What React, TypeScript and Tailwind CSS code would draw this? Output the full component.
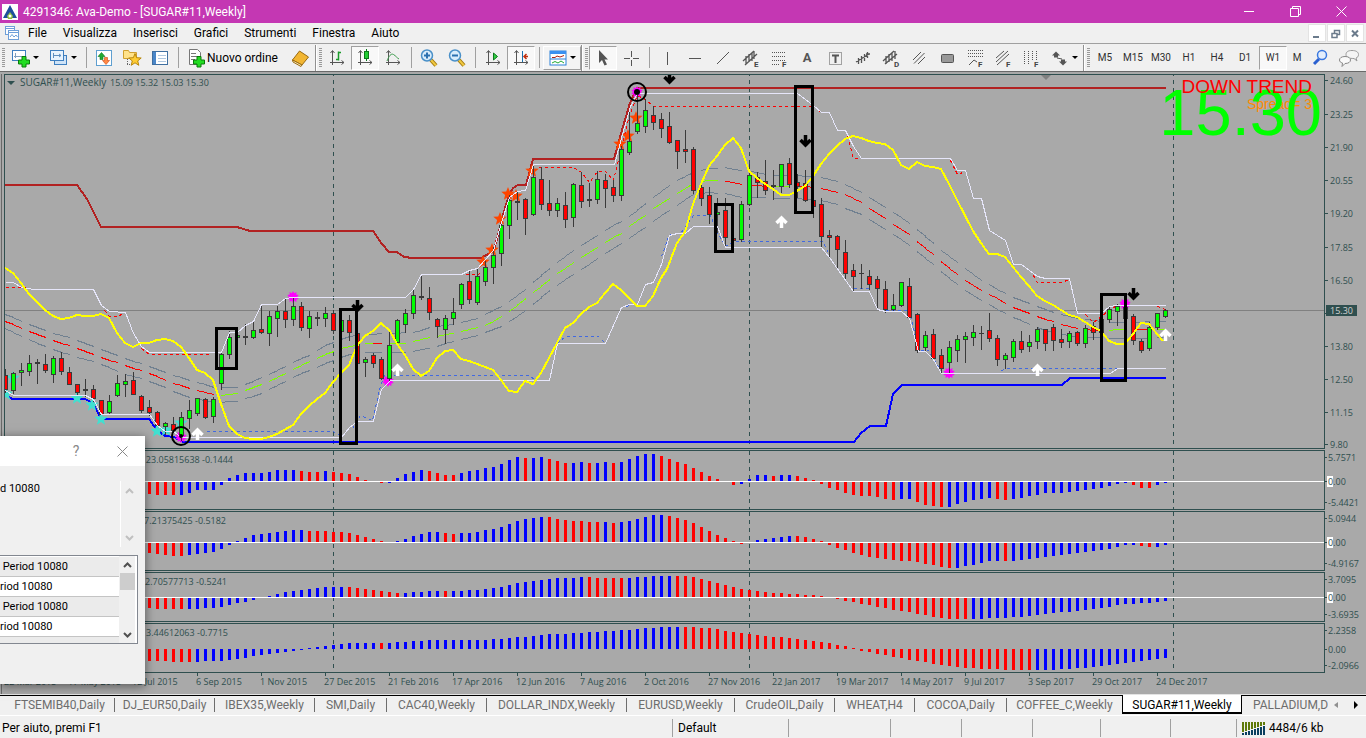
import React from 'react';

type Candle = [high: number, top: number, bottom: number, low: number, dir: 'u' | 'd' | 'n'];
type Point = [number, number];

const STEP = 8;
const FIRST_X = 5;
const barX = (i: number) => FIRST_X + i * STEP;

const TEAL = '#2f4f4f';

const CANDLES: Candle[] = [
  [369, 375, 389, 392, 'd'], [372, 373, 390, 393, 'u'], [363, 370, 372, 385, 'u'], [355, 363, 371, 375, 'u'],
  [359, 362, 363, 383, 'n'], [354, 364, 370, 372, 'd'], [356, 358, 374, 382, 'u'], [352, 358, 371, 374, 'd'],
  [367, 372, 384, 384, 'd'], [384, 384, 392, 395, 'd'], [379, 389, 390, 396, 'n'], [385, 389, 398, 401, 'd'],
  [400, 400, 414, 414, 'd'], [395, 401, 412, 413, 'u'], [375, 383, 395, 396, 'u'], [374, 381, 384, 396, 'u'],
  [372, 380, 394, 394, 'd'], [395, 396, 410, 412, 'd'], [400, 407, 412, 415, 'd'], [411, 412, 425, 425, 'd'],
  [422, 423, 426, 434, 'u'], [417, 424, 430, 432, 'd'], [412, 417, 435, 440, 'u'], [400, 410, 418, 428, 'u'],
  [398, 398, 413, 415, 'u'], [398, 399, 417, 418, 'd'], [397, 399, 416, 422, 'u'], [353, 354, 383, 389, 'u'],
  [331, 337, 354, 358, 'u'], [334, 335, 337, 338, 'u'], [324, 336, 337, 344, 'n'], [322, 330, 337, 338, 'u'],
  [304, 329, 332, 333, 'd'], [311, 316, 333, 345, 'u'], [306, 311, 318, 336, 'u'], [298, 311, 319, 327, 'd'],
  [297, 306, 319, 325, 'u'], [302, 306, 327, 330, 'd'], [311, 316, 328, 337, 'u'], [312, 317, 318, 325, 'n'],
  [307, 313, 318, 326, 'u'], [310, 313, 330, 333, 'd'], [315, 320, 331, 335, 'u'], [315, 320, 332, 340, 'd'],
  [330, 333, 363, 364, 'd'], [357, 359, 362, 376, 'u'], [353, 355, 363, 367, 'd'], [357, 359, 378, 379, 'd'],
  [331, 345, 378, 381, 'u'], [319, 320, 342, 343, 'u'], [309, 313, 324, 332, 'u'], [290, 295, 313, 318, 'u'],
  [274, 296, 297, 299, 'n'], [287, 298, 312, 319, 'd'], [318, 319, 326, 337, 'd'], [315, 318, 329, 343, 'u'],
  [298, 312, 318, 324, 'u'], [283, 284, 304, 308, 'u'], [271, 281, 299, 303, 'd'], [268, 276, 302, 304, 'u'],
  [261, 267, 281, 285, 'u'], [247, 255, 267, 283, 'u'], [223, 225, 253, 265, 'u'], [195, 200, 225, 238, 'u'],
  [191, 201, 202, 219, 'n'], [198, 199, 218, 234, 'd'], [165, 177, 214, 215, 'u'], [167, 179, 204, 209, 'd'],
  [180, 203, 210, 215, 'd'], [198, 203, 210, 216, 'u'], [192, 205, 219, 227, 'd'], [183, 184, 217, 226, 'u'],
  [172, 185, 201, 207, 'd'], [183, 199, 200, 206, 'n'], [171, 179, 199, 203, 'u'], [174, 180, 188, 207, 'd'],
  [180, 187, 195, 201, 'd'], [146, 149, 195, 200, 'u'], [109, 141, 152, 154, 'u'], [93, 123, 131, 133, 'u'],
  [99, 110, 126, 132, 'u'], [106, 115, 122, 129, 'd'], [113, 119, 128, 137, 'd'], [112, 126, 142, 143, 'd'],
  [140, 140, 151, 168, 'd'], [130, 149, 151, 162, 'd'], [147, 149, 190, 193, 'd'], [183, 187, 198, 205, 'd'],
  [187, 195, 214, 223, 'd'], [198, 212, 214, 232, 'u'], [198, 210, 237, 247, 'd'], [235, 238, 240, 241, 'd'],
  [201, 204, 239, 241, 'u'], [164, 175, 204, 205, 'u'], [172, 177, 182, 197, 'd'], [160, 181, 190, 194, 'd'],
  [170, 185, 186, 199, 'n'], [164, 164, 186, 192, 'u'], [158, 163, 184, 187, 'd'], [174, 182, 186, 197, 'd'],
  [170, 183, 200, 201, 'd'], [193, 200, 206, 217, 'd'], [198, 204, 236, 246, 'd'], [230, 235, 237, 257, 'd'],
  [235, 236, 249, 267, 'd'], [240, 252, 273, 278, 'd'], [264, 270, 276, 291, 'd'], [264, 273, 273, 288, 'n'],
  [270, 276, 284, 289, 'd'], [276, 279, 288, 309, 'd'], [281, 289, 309, 312, 'd'], [294, 305, 309, 311, 'u'],
  [282, 282, 305, 306, 'u'], [278, 286, 317, 318, 'd'], [313, 314, 350, 352, 'd'], [331, 335, 347, 351, 'u'],
  [329, 334, 358, 359, 'd'], [349, 355, 368, 373, 'd'], [341, 347, 362, 373, 'u'], [335, 339, 350, 361, 'u'],
  [332, 336, 339, 362, 'u'], [325, 332, 337, 345, 'u'], [326, 333, 333, 349, 'n'], [313, 330, 338, 341, 'd'],
  [335, 338, 359, 365, 'd'], [353, 355, 359, 368, 'u'], [339, 341, 357, 361, 'u'], [331, 341, 349, 352, 'd'],
  [335, 342, 346, 351, 'u'], [327, 329, 341, 348, 'u'], [329, 329, 343, 350, 'd'], [324, 327, 340, 350, 'd'],
  [329, 339, 342, 347, 'd'], [331, 333, 341, 347, 'u'], [331, 332, 343, 345, 'd'], [325, 328, 343, 347, 'u'],
  [322, 326, 332, 339, 'd'], [318, 319, 332, 333, 'n'], [307, 309, 319, 322, 'u'], [304, 306, 311, 325, 'u'],
  [304, 307, 318, 319, 'd'], [314, 316, 340, 344, 'd'], [339, 341, 350, 352, 'd'], [322, 327, 348, 350, 'u'],
  [313, 313, 327, 329, 'u'], [309, 310, 316, 317, 'u'],
];

const RESISTANCE = '5,185 77,185 87,199 101,227 237,227 250,231 373,231 382,244 389,252 397,252 404,257 413,258 481,258 490,253 494,250 498,235 503,215 509,195 513,188 518,185 526,185 533,159 614,159 622,130 630,103 637,88 1166,88';
const SUPPORT = '5,394 12,399 85,399 93,403 101,419 149,419 157,430 165,436 174,437 183,442 854,442 861,433 870,426 886,426 893,394 902,385 1062,385 1070,378 1166,378';
const FAST_LINE = '5,268 13,273 21,283 29,294 37,302 45,310 53,316 61,319 69,318 77,315 85,316 93,316 101,314 109,318 117,333 125,343 133,347 141,343 149,343 157,340 165,339 173,341 181,347 189,358 197,370 205,373 213,380 221,404 229,426 237,434 245,438 253,439 261,439 269,437 277,434 293,425 301,414 309,406 317,399 325,393 333,382 341,373 349,365 357,346 365,336 373,331 381,323 390,331 397,344 405,355 413,369 421,376 429,371 437,358 445,351 453,350 461,359 469,361 477,364 485,367 493,370 501,380 509,391 517,392 525,381 533,384 541,373 549,358 557,343 565,328 573,323 581,314 589,307 597,303 605,293 613,284 621,290 629,298 637,306 645,306 653,296 661,278 667,269 677,243 685,232 693,204 701,184 709,166 717,156 725,145 733,138 741,148 749,171 757,178 765,184 773,189 781,195 789,195 797,191 805,186 813,176 821,164 829,154 837,146 845,139 853,136 861,138 869,141 877,143 885,144 893,150 901,165 909,169 917,162 925,166 933,167 941,169 949,184 957,200 973,231 981,243 989,254 997,254 1005,257 1013,267 1021,277 1029,286 1037,296 1045,301 1053,305 1061,310 1069,315 1077,317 1085,322 1093,327 1101,331 1109,341 1117,344 1125,344 1133,334 1141,323 1149,324 1157,334 1163,341';
const CHANNEL_HIGH = '5,282 13,282 21,287 34,289 93,289 101,305 109,311 125,312 133,333 141,346 149,352 221,352 229,332 237,332 245,325 253,321 261,304 277,304 285,298 293,297 405,297 413,289 421,274 461,274 469,270 477,268 485,259 493,250 501,222 509,197 517,191 525,190 533,164 614,164 622,134 630,106 637,93 797,93 805,99 813,105 821,112 829,112 837,130 845,130 853,146 861,158 950,158 957,170 965,170 973,198 981,198 989,230 1005,240 1013,264 1021,264 1037,276 1045,278 1069,278 1077,313 1101,313 1109,306 1117,305 1165,305';
const CHANNEL_LOW = '5,390 13,395 85,395 93,399 101,414 149,414 157,425 165,431 173,431 181,437 341,437 349,427 357,421 373,421 381,389 390,380 549,380 557,343 605,343 621,307 629,304 637,304 645,284 653,282 661,264 669,235 677,233 685,233 693,226 717,226 725,247 821,247 829,257 853,291 869,291 877,309 885,311 901,311 909,318 918,351 925,351 933,359 941,373 1110,373 1117,368 1165,368';

const STOP_HIGH = [
  '5,287 25,287',
  '104,310 109,316 117,316 123,313',
  '141,348 149,354 210,354',
  '234,332 240,328',
  '465,274 478,274 481,270',
  '538,167 573,167 581,172 589,182 597,171 605,171 613,180 621,147 629,115 637,95 645,99 653,106 814,106 822,113',
  '847,136 853,158 858,158',
  '950,160 957,174 965,171',
  '1033,275 1037,282 1061,282 1069,279',
  '1085,314 1093,322 1101,316 1109,309 1117,305',
  '1157,306 1165,309',
];
const STOP_LOW = [
  '149,414 157,424 163,430',
  '206,431 333,431 341,436',
  '352,428 360,415 372,420 380,385 384,375 528,375 536,380 546,380',
  '557,343 565,336 598,336 605,343',
  '620,308 634,303',
  '661,256 669,234 680,233 693,215 710,215 717,232 725,246 733,241 822,241 829,254',
  '853,288 869,288',
  '885,310 909,310 917,345 920,350 928,350 940,370',
  '1001,370 1007,368 1117,368',
];

const MID: Point[] = [
  [5, 321], [29, 331], [53, 340], [77, 348], [101, 357], [125, 365], [149, 373], [173, 383], [197, 390], [214, 394],
  [221, 395], [237, 393], [245, 390], [262, 384], [286, 373], [309, 361], [325, 354], [341, 348], [365, 343], [405, 343],
  [413, 341], [429, 337], [453, 333], [461, 331], [485, 325], [501, 316], [509, 311], [533, 292], [557, 273], [581, 257],
  [605, 242], [622, 232], [629, 226], [646, 214], [653, 208], [677, 193], [692, 183], [709, 180], [720, 180], [741, 184],
  [757, 185], [773, 186], [805, 186], [821, 188], [839, 192], [845, 194], [862, 203], [869, 208], [887, 219], [893, 224],
  [911, 235], [917, 241], [934, 255], [941, 261], [958, 275], [965, 280], [983, 291], [989, 294], [1007, 304], [1031, 314],
  [1055, 322], [1079, 328], [1093, 330], [1125, 329], [1173, 329],
];
const BAND_HIGH: Point[] = [
  [5, 314], [22, 321], [47, 331], [71, 338], [95, 347], [125, 358], [149, 366], [173, 375], [197, 382], [214, 387],
  [237, 387], [245, 384], [262, 377], [286, 365], [309, 355], [325, 345], [349, 336], [365, 334], [413, 332], [429, 327],
  [453, 324], [479, 317], [503, 305], [527, 287], [550, 267], [575, 249], [599, 234], [605, 230], [629, 216], [653, 197],
  [662, 190], [677, 180], [695, 171], [709, 168], [725, 167], [741, 170], [757, 172], [773, 175], [797, 175], [821, 177],
  [839, 181], [863, 193], [887, 208], [911, 224], [934, 244], [959, 264], [983, 281], [1007, 294], [1031, 304],
  [1055, 313], [1079, 318], [1109, 322], [1173, 321],
];
const BAND_LOW: Point[] = [
  [5, 328], [22, 336], [47, 347], [71, 355], [95, 361], [119, 372], [143, 378], [167, 388], [191, 398], [214, 402],
  [237, 401], [262, 393], [286, 380], [309, 370], [325, 363], [349, 354], [365, 352], [405, 352], [429, 348], [453, 341],
  [479, 334], [503, 325], [527, 309], [550, 289], [575, 273], [599, 257], [623, 242], [646, 226], [670, 209], [695, 193],
  [709, 192], [725, 193], [741, 197], [797, 198], [821, 200], [839, 205], [863, 215], [887, 230], [911, 246], [934, 265],
  [959, 286], [983, 301], [1007, 314], [1031, 325], [1055, 333], [1079, 337], [1125, 338], [1173, 337],
];

// First visible histogram bar is number 18, the rest is under the dialog
const HIST_START = 18;
const HIST_1 = '-12r -13r -13r -13r -13b -11b -8b -8b -8b -3b 3b 6b 8b 8b 8b 9b 11b 11b 11b 10r 9r 9r 10b 9r 8r 7r 4r 1r 0r -1r -1b 3b 7b 9b 11b 10r 8r 6r 6r 8b 10b 11b 13b 14b 17b 21b 24b 23r 23b 24b 22r 20r 18r 18b 19b 18r 18b 19b 18r 19b 22b 25b 27b 27b 25r 22r 19r 17r 13r 9r 5r 2r 0r -3r -2b 2b 6b 6b 5r 6b 6b 5r 3r 1r -2r -6r -8r -11r -13r -14r -14r -15r -17r -18r -17b -17b -20r -23r -24r -25r -25b -22b -20b -18b -17b -16b -17r -18r -17b -16b -14b -13b -11b -11b -11b -10b -9b -8b -7b -6b -4b -2b -1b -3r -6r -6r -3b -1b';
const HIST_2 = '-10r -11r -12r -13r -13r -12b -11b -10b -9b -6b -2b 1b 4b 7b 8b 9b 10b 11b 12b 12b 11r 11r 11r 10r 10r 9r 7r 5r 3r 1r 0r 1b 3b 6b 8b 10b 10b 9r 8r 9b 9b 10b 12b 13b 15b 18b 21b 23b 24b 25b 25r 23r 22r 21r 21r 20r 20r 20b 19r 20b 21b 23b 25b 27b 27b 26r 24r 22r 19r 15r 11r 7r 4r 1r -1r 0r 2b 3b 4b 5b 6b 6r 5r 3r 1r -2r -5r -7r -10r -12r -14r -15r -16r -17r -18r -18r -19r -21r -22r -24r -25r -25b -23b -22b -20b -18b -18b -18r -18b -17b -16b -15b -14b -13b -12b -11b -10b -9b -8b -7b -6b -4b -2b -2b -3r -4r -4b -2b';
const HIST_3 = '-10r -11r -11r -11r -11r -11b -11b -10b -10b -9b -7b -5b -4b -2b 0b 1b 3b 5b 6b 7b 8b 9b 10b 10b 10b 10r 9r 8r 7r 6r 5r 4r 4b 5b 5b 6b 6b 6r 6b 6b 7b 7b 8b 9b 10b 12b 14b 15b 16b 17b 18b 19b 19b 19b 20b 20r 19r 19r 19r 19r 19b 20b 20b 21b 21b 21b 21r 21r 20r 18r 16r 14r 12r 10r 8r 7r 6r 5r 4r 4r 3r 3r 2r 2r 1r 0r -1r -3r -4r -6r -7r -9r -10r -12r -13r -14r -16r -17r -19r -20r -21r -21r -21r -21b -21b -20b -20b -20b -19b -19b -18b -17b -16b -15b -14b -14b -13b -12b -11b -10b -9b -7b -6b -6b -5b -5b -4b -3b';
const HIST_4 = '-12r -12r -12r -13r -13r -13r -13b -12b -12b -12b -11b -10b -9b -7b -6b -5b -4b -3b -2b -1b 1b 2b 3b 4b 5b 6b 6b 6b 6b 6r 6b 7b 7b 8b 8b 9b 9b 9b 9b 9b 9b 9b 9b 10b 10b 11b 12b 12b 13b 14b 15b 15b 15b 16b 16b 17b 17b 18b 18b 19b 19b 20b 21b 21b 22b 22b 22b 22r 22r 21r 21r 20r 18r 17r 16r 15r 14r 13r 12r 12r 11r 10r 9r 8r 7r 6r 4r 3r 1r -2r -3r -5r -6r -8r -9r -11r -12r -13r -15r -16r -17r -18r -19r -19r -20r -20r -20r -21r -21r -21r -21r -21b -21b -21b -20b -20b -19b -19b -18b -17b -16b -15b -14b -13b -12b -11b -10b -9b';

const PRICES: [string, number][] = [
  ['24.60', 80], ['23.25', 114], ['21.90', 147], ['20.55', 180], ['19.20', 213], ['17.85', 247],
  ['16.50', 280], ['13.80', 346], ['12.50', 379], ['11.15', 412], ['9.80', 444],
];

const DATES = [
  '22 Mar 2015', '17 May 2015', '12 Jul 2015', '6 Sep 2015', '1 Nov 2015', '27 Dec 2015', '21 Feb 2016',
  '17 Apr 2016', '12 Jun 2016', '7 Aug 2016', '2 Oct 2016', '27 Nov 2016', '22 Jan 2017', '19 Mar 2017',
  '14 May 2017', '9 Jul 2017', '3 Sep 2017', '29 Oct 2017', '24 Dec 2017',
];

const YEAR_LINES = [333, 749, 1173];

const valueAt = (pts: Point[], x: number) => {
  for (let i = 1; i < pts.length; i++) {
    const [x1, y1] = pts[i];
    const [x0, y0] = pts[i - 1];
    if (x <= x1) return Math.round(y0 + ((y1 - y0) * (x - x0)) / (x1 - x0));
  }
  return pts[pts.length - 1][1];
};

const midColor = (x: number) => {
  if (x < 218) return '#ff0000';
  if (x >= 373 && x < 389) return '#ff0000';
  if (x < 717) return '#7fff00';
  if (x >= 773 && x < 789) return '#7fff00';
  if (x >= 1109 && x < 1133) return '#7fff00';
  if (x >= 1157) return '#7fff00';
  return '#ff0000';
};

// Two bars drawn, one bar skipped
const DashedCurve: React.FC<{ points: Point[]; color: (x: number) => string }> = ({ points, color }) => {
  const pieces: React.ReactNode[] = [];
  for (let x = FIRST_X; x < 1165; x += STEP * 3) {
    [x, x + STEP].forEach(from => {
      if (from >= 1165) return;
      pieces.push(
        <line key={from} x1={from} y1={valueAt(points, from) + 0.5} x2={from + STEP + 1} y2={valueAt(points, from + STEP) + 0.5} stroke={color(from)} />
      );
    });
  }
  return <>{pieces}</>;
};

const starPoints = (cx: number, cy: number, outer: number, inner: number, spikes: number) =>
  Array.from({ length: spikes * 2 }, (_, i) => {
    const r = i % 2 === 0 ? outer : inner;
    const a = (Math.PI * i) / spikes - Math.PI / 2;
    return `${(cx + r * Math.cos(a)).toFixed(1)},${(cy + r * Math.sin(a)).toFixed(1)}`;
  }).join(' ');

const Arrow: React.FC<{ x: number; y: number; up?: boolean }> = ({ x, y, up }) => (
  <path
    d={up ? 'M0 6V-5M-5 1L0 -4L5 1' : 'M0 -6V5M-5 -1L0 4L5 -1'}
    transform={`translate(${x + 0.5} ${y})`}
    fill="none"
    stroke={up ? '#ffffff' : '#000000'}
    strokeWidth="3.500"
  />
);

const YearLines: React.FC = () => (
  <>
    {YEAR_LINES.map(x => (
      <line key={x} x1={x + 0.5} x2={x + 0.5} y1="0" y2="700" stroke={TEAL} strokeDasharray="4 4" shapeRendering="crispEdges" />
    ))}
  </>
);

const MainChart: React.FC = () => (
  <svg className="block w-full h-[373px]" role="img" aria-label="SUGAR#11 weekly chart">
    <g transform="translate(-5 -75)">
      <g shapeRendering="crispEdges" fill="none">
        <YearLines />
        <line x1="0" x2="3000" y1="310.5" y2="310.5" stroke="#808080" />
        <DashedCurve points={BAND_HIGH} color={() => '#708090'} />
        <DashedCurve points={BAND_LOW} color={() => '#708090'} />
        <DashedCurve points={MID} color={midColor} />
      </g>

      <g shapeRendering="crispEdges" fill="none">
        <polyline points={RESISTANCE} stroke="#b22222" strokeWidth="2" />
        <polyline points={SUPPORT} stroke="#0000ff" strokeWidth="2" />
        {STOP_HIGH.map(p => <polyline key={p} points={p} transform="translate(0.5 0.5)" stroke="#ff0000" strokeDasharray="3 3" />)}
        {STOP_LOW.map(p => <polyline key={p} points={p} transform="translate(0.5 0.5)" stroke="#4169e1" strokeDasharray="3 3" />)}
      </g>

      <g fill="#40e0d0">
        {[[13, 378], [6, 394], [77, 398], [92, 405], [101, 419], [157, 431], [166, 430], [181, 423]].map(([x, y]) => (
          <polygon key={x} points={starPoints(x, y, 7, 3, 5)} />
        ))}
      </g>

      <g fill="#ff4500">
        {[[483, 262], [492, 250], [500, 219], [508, 194], [516, 196], [532, 171], [620, 144], [628, 136], [636, 118]].map(([x, y]) => (
          <polygon key={x} points={starPoints(x, y, 7, 3, 5)} />
        ))}
      </g>

      <g fill="#ff00ff">
        {[[293, 297], [388, 381], [637, 92], [949, 373], [1125, 304], [181, 437]].map(([x, y]) => (
          <polygon key={x} points={starPoints(x, y, 6, 4, 10)} />
        ))}
      </g>

      <g shapeRendering="crispEdges">
        {CANDLES.map(([high, top, bottom, low, dir], i) => {
          const x = barX(i);
          return (
            <g key={i}>
              <rect x={x} y={high} width="1" height={low - high + 1} fill="#3a3a3a" />
              {dir === 'n' ? (
                <rect x={x - 2} y={top} width="5" height={bottom - top + 1} fill="#3a3a3a" />
              ) : (
                <rect x={x - 1.5} y={top + 0.5} width="4" height={Math.max(bottom - top, 2)} fill={dir === 'u' ? '#00ff00' : '#ff0000'} stroke="#3a3a3a" />
              )}
            </g>
          );
        })}
      </g>

      <g shapeRendering="crispEdges" fill="none">
        <polyline points={CHANNEL_HIGH} transform="translate(0.5 0.5)" stroke="#e6e6fa" />
        <polyline points={CHANNEL_LOW} transform="translate(0.5 0.5)" stroke="#e6e6fa" />
        <polyline points={FAST_LINE} stroke="#ffff00" strokeWidth="2" />
      </g>

      <g fill="none" stroke="#000000">
        <circle cx="181" cy="436" r="9" strokeWidth="2" />
        <circle cx="637" cy="92" r="9" strokeWidth="2" />
        <circle cx="637" cy="92" r="3" fill="#000000" stroke="none" />
        <circle cx="181" cy="436" r="2" fill="#000000" stroke="none" />
        <rect x="216.5" y="328.5" width="20" height="40" strokeWidth="3" />
        <rect x="340.5" y="309.5" width="16" height="134" strokeWidth="3" />
        <rect x="715.5" y="204.5" width="17" height="47" strokeWidth="3" />
        <rect x="795.5" y="86.5" width="17" height="126" strokeWidth="3" />
        <rect x="1101.5" y="294.5" width="24" height="86" strokeWidth="3" />
      </g>

      <Arrow x={669} y={78} />
      <Arrow x={805} y={141} />
      <Arrow x={357} y={306} />
      <Arrow x={1133} y={294} />
      <Arrow up x={197} y={434} />
      <Arrow up x={397} y={370} />
      <Arrow up x={781} y={222} />
      <Arrow up x={1037} y={370} />
      <Arrow up x={1165} y={335} />

      <path d="M1041 75h10l-5 5z" fill="#808080" />
      <path d="M7 81h8l-4 4z" fill={TEAL} />
      <text x="20" y="86" fill={TEAL} className="text-[10px]">SUGAR#11,Weekly</text>
      <text x="110" y="86" fill={TEAL} className="text-[9px]">15.09 15.32 15.03 15.30</text>
    </g>
  </svg>
);

const PriceAxis: React.FC = () => (
  <svg className="block w-full h-[375px]">
    <g transform="translate(-1325 -74)">
      {PRICES.map(([label, y]) => (
        <g key={label}>
          <rect x="1325" y={y} width="3" height="1" fill={TEAL} />
          <text x="1330" y={y + 4} fill={TEAL} className="text-[9px]">{label}</text>
        </g>
      ))}
      <rect x="1325" y="313" width="3" height="1" fill={TEAL} />
      <rect x="1326" y="305" width="31" height="11" fill={TEAL} />
      <text x="1330" y="314" fill="#d3d3d3" className="text-[9px]">15.30</text>
    </g>
  </svg>
);

interface HistogramProps {
  data: string;
  zero: number;
  title: string;
  titleEnd: number;
  height: string;
  zeroLine?: boolean;
}

const Histogram: React.FC<HistogramProps> = ({ data, zero, title, titleEnd, height, zeroLine = true }) => (
  <svg className={`block w-full ${height}`}>
    <g transform="translate(-5 0)" shapeRendering="crispEdges">
      <YearLines />
      {data.split(' ').map((item, i) => {
        const value = parseInt(item, 10);
        const x = barX(i + HIST_START) - 1;
        const below = zeroLine ? zero + 1 : zero;
        return (
          <rect
            key={i}
            x={x}
            y={value > 0 ? zero - value : below}
            width="3"
            height={Math.abs(value)}
            fill={item.endsWith('r') ? '#ff0000' : '#0000ff'}
          />
        );
      })}
      {zeroLine && <rect x="0" y={zero} width="3000" height="1" fill="#ffffff" />}
      <text x={titleEnd} y="12" textAnchor="end" fill={TEAL} className="text-[9px]">{title}</text>
    </g>
  </svg>
);

const HistAxis: React.FC<{ labels: [string, number][]; height: string; mark?: boolean }> = ({ labels, height, mark = true }) => (
  <svg className={`block w-full ${height}`}>
    {labels.map(([label, y]) => (
      <g key={label}>
        <rect x="0" y={y} width="2" height="1" fill={TEAL} />
        {label === '0.00' && mark && <rect x="2" y={y - 5} width="6" height="11" fill="#ffffff" />}
        <text x="3" y={y + 4} fill={TEAL} className="text-[9px]">{label}</text>
      </g>
    ))}
  </svg>
);

const DateAxis: React.FC = () => (
  <svg className="block w-full h-[21px]">
    <g transform="translate(-4 0)">
      {DATES.map((d, i) => (
        <g key={d}>
          <rect x={5 + i * 64} y="0" width="1" height="3" fill={TEAL} />
          <text x={4 + i * 64} y="12" fill={TEAL} className="text-[9px]">{d}</text>
        </g>
      ))}
    </g>
  </svg>
);

/* ---------- toolbar ---------- */

const Icon: React.FC<{ children: React.ReactNode; w?: number }> = ({ children, w = 20 }) => (
  <svg width={w} height="20" viewBox={`0 0 ${w} 20`} fill="none" stroke="#555555" className="shrink-0">{children}</svg>
);

const Caret = () => (
  <svg width="6" height="4" className="shrink-0"><path d="M0 0h6l-3 3z" fill="#000000" /></svg>
);

const Tool: React.FC<{ label: string; active?: boolean; wide?: boolean; framed?: boolean; children: React.ReactNode }> = ({ label, active, wide, framed, children }) => (
  <button
    type="button"
    aria-label={label}
    className={`h-6 flex items-center justify-center shrink-0 ${wide ? 'w-[38px] gap-0.5' : 'w-7'} ${active ? 'bg-[#f8f8f8] border border-[#a0a0a0] border-r-white border-b-white' : ''} ${framed ? 'bg-[#f4f4f4] border border-white border-r-[#a0a0a0] border-b-[#a0a0a0]' : ''}`}
  >
    {children}
  </button>
);

const Sep = () => <span className="w-2 h-[21px] flex justify-center shrink-0"><span className="w-px bg-[#a0a0a0]" /></span>;

const BarEnd = () => <span className="w-0.5 h-[26px] shrink-0 border-l border-[#909090] bg-white" />;

const Grip = () => (
  <svg width="6" height="20" className="shrink-0">
    {Array.from({ length: 10 }, (_, i) => <rect key={i} x="2" y={i * 2} width="3" height="1" fill="#9a9a9a" />)}
  </svg>
);

const Plus = () => <path d="M11 8.500h4v3.500h3.500v4H15v3h-4v-3H7.500v-4H11z" fill="#22dd22" stroke="#0a7a0a" />;

const AXES = 'M5.500 3v14M3 14.500h14M3.500 5l2-2.500 2 2.500M14.500 12.500l2.500 2-2.500 2';

const letter = (s: string) => <text x="13" y="19" stroke="none" fill="#444444" className="text-[8px] font-bold">{s}</text>;

const TIMEFRAMES = ['M5', 'M15', 'M30', 'H1', 'H4', 'D1', 'W1'];

const Toolbar: React.FC = () => (
  <div role="toolbar" className="h-[27px] flex items-center bg-[#f0f0f0] overflow-hidden">
    <Grip />
    <Tool label="Nuovo grafico" wide>
      <Icon>
        <rect x="1.500" y="2.500" width="13" height="10" fill="#ffffff" stroke="#3f7fbf" />
        <path d="M4.500 5v5M3 8.500h8" stroke="#7f9fbf" />
        <Plus />
      </Icon>
      <Caret />
    </Tool>
    <Tool label="Profili" wide>
      <Icon>
        <rect x="5.500" y="7.500" width="12" height="9" fill="#cfe3f7" stroke="#3f7fbf" />
        <rect x="1.500" y="2.500" width="13" height="10" fill="#e8f3fd" stroke="#3f7fbf" />
        <path d="M4.500 5v5M4 7.500h8M10 6l2 1.500-2 1.500" stroke="#5f8fbf" />
      </Icon>
      <Caret />
    </Tool>
    <Sep />
    <Tool label="Market watch">
      <Icon>
        <rect x="2.500" y="2.500" width="15" height="15" fill="#ffffff" stroke="#5f9fd0" />
        <path d="M4 8.500l3.500-4 3.500 4H9v3H6v-3z" fill="#22aa33" stroke="#117722" strokeWidth="0.6" />
        <path d="M8.500 12.500l3.500 4 3.500-4h-2v-3h-3v3z" fill="#ff8844" stroke="#cc4411" strokeWidth="0.6" />
      </Icon>
    </Tool>
    <Tool label="Navigatore">
      <Icon>
        <path d="M1.500 2.500h5l1 2h7v6h-13z" fill="#ffe28a" stroke="#d0a030" />
        <path d="M5.500 11v6M5 16.500h3" stroke="#666666" strokeDasharray="1 1" />
        <polygon points={starPoints(13, 12, 6.5, 2.8, 5)} fill="#ffcc33" stroke="#b8860b" />
      </Icon>
    </Tool>
    <Tool label="Terminale">
      <Icon>
        <rect x="2.500" y="3.500" width="15" height="13" fill="#ffffff" stroke="#3f6fa0" />
        <rect x="3" y="4" width="3" height="12" fill="#4a86c8" stroke="none" />
        <path d="M8 7.500h8M8 10.500h8M8 13.500h8" stroke="#b0c8e0" />
      </Icon>
    </Tool>
    <Sep />
    <button type="button" className="w-[105px] h-6 pl-1 flex items-center gap-px shrink-0 text-[12px] whitespace-nowrap">
      <Icon>
        <path d="M3.500 1.500h8l3 3v12h-11z" fill="#ffffff" stroke="#777777" />
        <path d="M5 5.500h5M5 8.500h7M5 11.500h4" stroke="#777777" />
        <Plus />
      </Icon>
      Nuovo ordine
    </button>
    <Tool label="MetaEditor">
      <Icon>
        <path d="M1.500 12l7-9 9 6-6.500 8z" fill="#f2b632" stroke="#9a6a10" />
        <path d="M1.500 12l9.500 5-1 1.500L2 14z" fill="#fff2c0" stroke="#9a6a10" />
      </Icon>
    </Tool>
    <BarEnd />
    <Grip />

    <Tool label="Grafico a barre">
      <Icon><path d={AXES} /><path d="M11.500 3.500v9M11.500 4.500h2.500M9 11.500h2.500" stroke="#1a9a2a" strokeWidth="1.500" /></Icon>
    </Tool>
    <Tool label="Candele" active>
      <Icon><path d={AXES} /><path d="M11.500 1v12" stroke="#0a7a1a" /><rect x="9.500" y="3.500" width="4" height="7" fill="#22cc33" stroke="#0a7a1a" /></Icon>
    </Tool>
    <Tool label="Linea">
      <Icon><path d={AXES} /><path d="M4 13c2-5 4-8 6.500-6.500S14 10 16 11" stroke="#3a9a4a" /></Icon>
    </Tool>
    <Sep />
    <Tool label="Ingrandisci">
      <Icon>
        <path d="M12 12l5 5.500" stroke="#a07810" strokeWidth="4" /><path d="M12 12l5 5.500" stroke="#f0c840" strokeWidth="2" />
        <circle cx="8" cy="7.500" r="5.500" fill="#d8ecfb" stroke="#4a90c8" strokeWidth="1.500" />
        <path d="M5 7.500h6M8 4.500v6" stroke="#2a70b0" strokeWidth="2" />
      </Icon>
    </Tool>
    <Tool label="Riduci">
      <Icon>
        <path d="M12 12l5 5.500" stroke="#a07810" strokeWidth="4" /><path d="M12 12l5 5.500" stroke="#f0c840" strokeWidth="2" />
        <circle cx="8" cy="7.500" r="5.500" fill="#d8ecfb" stroke="#4a90c8" strokeWidth="1.500" />
        <path d="M5 7.500h6" stroke="#2a70b0" strokeWidth="2" />
      </Icon>
    </Tool>
    <Sep />
    <Tool label="Scorrimento automatico">
      <Icon><path d={AXES} /><path d="M10.500 5l4 3.500-4 3.500z" fill="#33cc44" stroke="#0a7a1a" /></Icon>
    </Tool>
    <Tool label="Spostamento grafico" active>
      <Icon><path d={AXES} /><path d="M11.500 3v11" stroke="#1a70b0" /><path d="M17 8.500h-4M15.500 6L13 8.500l2.500 2.500" stroke="#c03010" strokeWidth="1.500" /></Icon>
    </Tool>
    <Sep />
    <Tool label="Modelli" wide framed>
      <Icon>
        <rect x="2" y="3" width="16" height="14" fill="#ffffff" stroke="#2a80d8" />
        <rect x="2" y="3" width="16" height="3" fill="#3a90f0" stroke="none" />
        <path d="M4 9.500h3l2-1.500 3 1 4-1.500" stroke="#b02010" />
        <path d="M2 11h16" stroke="#2a80d8" />
        <path d="M4 15l3-1.500 3 1.500 3-2 3 2" stroke="#22aa33" />
      </Icon>
      <Caret />
    </Tool>
    <BarEnd />
    <Grip />

    <Tool label="Cursore" active>
      <Icon><path d="M6 2v13l3-3 2.500 5.500 2.500-1-2.500-5H15z" fill="#555555" stroke="none" /></Icon>
    </Tool>
    <Tool label="Mirino">
      <Icon><path d="M10.500 3v6M10.500 12v6M3 10.500h6M12 10.500h6" /></Icon>
    </Tool>
    <Sep />
    <Tool label="Linea verticale"><Icon><path d="M10.500 4v13" /></Icon></Tool>
    <Tool label="Linea orizzontale"><Icon><path d="M4 10.500h12" /></Icon></Tool>
    <Tool label="Trendline"><Icon><path d="M4 16L16 4" /></Icon></Tool>
    <Tool label="Canale equidistante">
      <Icon><path d="M2 13l11-10M4 17L16 6M5 8v8M8 6v8M11 5v8M13 3v8" strokeWidth="1.300" />{letter('E')}</Icon>
    </Tool>
    <Tool label="Ritracciamento di Fibonacci">
      <Icon><path d="M3 4.500h14M3 8.500h14M3 12.500h14M3 16.500h8" strokeDasharray="1 1" />{letter('F')}</Icon>
    </Tool>
    <Tool label="Testo"><span className="text-[13px] font-bold text-[#555555]">A</span></Tool>
    <Tool label="Etichetta">
      <Icon><rect x="4.500" y="4.500" width="12" height="12" strokeDasharray="1 1" /><path d="M7 7.500h7M10.500 7v8" strokeWidth="2" /></Icon>
    </Tool>
    <Tool label="Canale di regressione">
      <Icon><path d="M3 14l13-8M5.500 10v6M8.500 8v7M11.500 6v7M14.500 4v6M13 6h4" strokeWidth="1.300" /></Icon>
    </Tool>
    <Tool label="Deviazione standard">
      <Icon><path d="M2 13l11-10M4 16L16 6M5 8v8M8 6v8M11 5v8M14 3v8" strokeWidth="1.300" />{letter('D')}</Icon>
    </Tool>
    <Tool label="Andrews pitchfork"><Icon><path d="M4 12l8-8M5 15.500L15.500 5M9 16l7-7" /></Icon></Tool>
    <Tool label="Rettangolo"><Icon><rect x="4.500" y="6.500" width="12" height="8" rx="1" fill="#999999" /></Icon></Tool>
    <Tool label="Espansione di Fibonacci">
      <Icon><path d="M3 2.500h15M3 5.500h15M3 8.500h15" strokeDasharray="1 1" /><path d="M4 17l5-5 3 2" />{letter('F')}</Icon>
    </Tool>
    <Tool label="Canale di Fibonacci">
      <Icon><path d="M3 10l8-7M3 14L15 3M4 17L16 6" />{letter('F')}</Icon>
    </Tool>
    <Tool label="Fasce temporali di Fibonacci">
      <Icon><path d="M3.500 3v14M7.500 3v14M11.500 3v9M15.500 3v9" strokeDasharray="1 1" />{letter('F')}</Icon>
    </Tool>
    <Tool label="Frecce" wide>
      <Icon>
        <path d="M2 7.500l4-4 4 4H8v2H4v-2zM9 13.500l4 4 4-4h-2v-2h-4v2z" fill="#555555" stroke="none" />
        <path d="M7 10l5 1" />
      </Icon>
      <Caret />
    </Tool>
    <BarEnd />
    <Grip />

    {TIMEFRAMES.map(tf => (
      <Tool key={tf} label={tf} active={tf === 'W1'}><span className="text-[10px] text-[#303030]">{tf}</span></Tool>
    ))}
    <button type="button" className="w-5 shrink-0 text-[10px] text-[#303030]">M</button>
    <Tool label="Cerca">
      <Icon>
        <path d="M8 11l-5 5" stroke="#2a60d0" strokeWidth="3" />
        <circle cx="11" cy="7" r="4.500" fill="#e4eefc" stroke="#3a78e0" strokeWidth="1.500" />
      </Icon>
    </Tool>
    <Tool label="Chat">
      <Icon w={22}>
        <path d="M14 2.500c4 0 6.500 1.500 6.500 4 0 2-1 3-2.500 3.500l1 3-3-2.500c-5 0-8-1-8-4 0-2.500 2-4 6-4z" fill="#f4f4f4" stroke="#999999" />
        <path d="M7 8.500c3.500 0 5.500 1.500 5.500 3.500S10.500 15.500 7 15.500l-3 3 .5-3.500c-2-.5-3-1.500-3-3 0-2 2-3.500 5.500-3.500z" fill="#fafafa" stroke="#888888" />
      </Icon>
    </Tool>
  </div>
);

/* ---------- window ---------- */

const MENU = ['File', 'Visualizza', 'Inserisci', 'Grafici', 'Strumenti', 'Finestra', 'Aiuto'];

const TitleBar: React.FC = () => (
  <header className="h-[23px] flex items-center bg-[#c437b3] text-white">
    <svg width="16" height="16" className="ml-0.5 shrink-0">
      <rect width="16" height="16" fill="#ffffff" />
      <path d="M8 1L15 14H10L8 9L6 14H1z" fill="#1d4f9c" />
      <path d="M5 12l3-4 3 4-1 3H6z" fill="#8fbf3f" />
      <circle cx="8" cy="12" r="1.500" fill="#ffffff" />
    </svg>
    <h1 className="ml-[5px] flex-1 text-[12px]">4291346: Ava-Demo - [SUGAR#11,Weekly]</h1>
    <button type="button" aria-label="Riduci a icona" className="w-[46px] h-full flex items-center justify-center">
      <svg width="10" height="10"><path d="M0 4.500h10" stroke="#ffffff" /></svg>
    </button>
    <button type="button" aria-label="Ripristina" className="w-[46px] h-full flex items-center justify-center">
      <svg width="11" height="11" fill="none" stroke="#ffffff"><path d="M.5 2.500h8v8h-8zM2.500 2.500v-2h8v8h-2" /></svg>
    </button>
    <button type="button" aria-label="Chiudi" className="w-[46px] mr-0.5 h-full flex items-center justify-center">
      <svg width="11" height="11" stroke="#ffffff"><path d="M.5 .5l10 10M10.500 .5l-10 10" /></svg>
    </button>
  </header>
);

const MenuBar: React.FC = () => (
  <nav className="h-[21px] flex items-center bg-[#f0f0f0] border-b border-[#a0a0a0] text-[12px]">
    <svg width="14" height="14" className="ml-[5px] mr-px shrink-0" fill="none" stroke="#6f9fd8">
      <rect x=".5" y=".5" width="9" height="8" fill="#ffffff" />
      <rect x="3.500" y="4.500" width="10" height="9" fill="#ffffff" />
      <path d="M3.500 6.500h10M5 11l2-2.500 2 2.500 2-2 1.500 2M.5 2.500h9" />
    </svg>
    {MENU.map(item => <button key={item} type="button" className="px-2">{item}</button>)}
    <div className="ml-auto mr-0.5 flex gap-px">
      {['M4 12h6', 'M4 8.500h5v4h-5zM6.500 8v-2.500h5v4h-2', 'M5 5.500l6 6M11 5.500l-6 6'].map((d, i) => (
        <button key={d} type="button" aria-label={['Riduci', 'Ripristina', 'Chiudi'][i]} className="w-[18px] h-[18px] bg-white border border-[#e3e3e3]">
          <svg width="16" height="16" fill="none" stroke="#6b7b8c" strokeWidth={i === 1 ? 1.500 : 2}><path d={d} /></svg>
        </button>
      ))}
    </div>
  </nav>
);

const ChevronGlyph: React.FC<{ up?: boolean; color: string }> = ({ up, color }) => (
  <svg width="9" height="6" fill="none" stroke={color} strokeWidth="2"><path d={up ? 'M1 5l3.500-3.500L8 5' : 'M1 1l3.500 3.500L8 1'} /></svg>
);

const ALERTS = [' Period 10080', 'riod 10080', ' Period 10080', 'riod 10080'];

const AlertDialog: React.FC = () => (
  <div role="dialog" aria-label="Avviso" className="absolute left-0 bottom-[10px] w-[145px] h-[248px] flex flex-col bg-[#f0f0f0] font-['Roboto','Noto_Sans',sans-serif] text-[11px] text-black shadow-[0_2px_10px_rgba(0,0,0,0.5)]">
    <div className="h-[30px] flex items-center justify-end bg-white text-[#888888]">
      <button type="button" aria-label="Guida" className="w-[46px] text-[14px]">?</button>
      <button type="button" aria-label="Chiudi" className="w-[46px] flex justify-center">
        <svg width="11" height="11" stroke="#888888"><path d="M.5 .5l10 10M10.500 .5l-10 10" /></svg>
      </button>
    </div>
    <div className="mt-4 h-[65px] flex">
      <p className="w-[121px] -mt-px border-r border-white">d 10080</p>
      <div className="flex-1 mr-2 py-1.5 flex flex-col items-center justify-between">
        <ChevronGlyph up color="#c0c0c0" />
        <ChevronGlyph color="#c0c0c0" />
      </div>
    </div>
    <div className="mt-2 mr-[7px] h-[89px] flex bg-white border border-l-0 border-[#828790]">
      <ul className="w-[119px] overflow-hidden pt-px">
        {ALERTS.map((text, i) => (
          <li key={i} className={`h-5 leading-[19px] whitespace-pre border-b border-[#c4c4c4] ${i % 2 === 0 ? 'bg-[#ebebeb]' : 'bg-white'}`}>{text}</li>
        ))}
        <li className="h-5 bg-[#ebebeb]" />
      </ul>
      <div className="flex-1 mr-0.5 flex flex-col items-center bg-[#f0f0f0]">
        <span className="h-[17px] flex items-center"><ChevronGlyph up color="#505050" /></span>
        <span className="w-[15px] h-[17px] bg-[#cdcdcd]" />
        <span className="mt-auto h-[17px] flex items-center"><ChevronGlyph color="#505050" /></span>
      </div>
    </div>
  </div>
);

const PANE = 'border border-[#2f4f4f] overflow-hidden min-w-0';

const ChartWindow: React.FC = () => (
  <main className="relative bg-[#a9a9a9] border-t border-[#696969] pt-0.5 pr-0.5 flex-1 font-['Open_Sans','Noto_Sans',sans-serif]">
    <div className="ml-px pl-0.5 border-l border-[#696969] grid grid-cols-[minmax(0,1fr)_39px] gap-y-px">
      <div className={`relative ${PANE}`}>
        <MainChart />
        <div className="absolute top-0 right-0 w-40 h-20 font-['Liberation_Sans',sans-serif] whitespace-nowrap text-right">
          <span className="absolute right-3 top-5 text-[14px] leading-[18px] text-[#ff8c00]">Spread= 3</span>
          <span className="absolute right-0.5 top-0 text-[65px] leading-[76px] text-[#00ff00]">15.30</span>
          <span className="absolute right-3 top-0 text-[19px] leading-6 text-[#ff0000]">DOWN TREND</span>
        </div>
      </div>
      <PriceAxis />

      <div className={PANE}><Histogram data={HIST_1} zero={30} title="23.05815638 -0.1444" titleEnd={233} height="h-[58px]" /></div>
      <HistAxis height="h-[60px]" labels={[['5.7571', 7], ['0.00', 31], ['-5.4421', 52]]} />
      <div className={PANE}><Histogram data={HIST_2} zero={30} title="7.21375425 -0.5182" titleEnd={226} height="h-[58px]" /></div>
      <HistAxis height="h-[60px]" labels={[['5.0944', 7], ['0.00', 31], ['-4.9167', 52]]} />
      <div className={PANE}><Histogram data={HIST_3} zero={24} title="2.70577713 -0.5241" titleEnd={227} height="h-[48px]" /></div>
      <HistAxis height="h-[50px]" labels={[['3.7095', 7], ['0.00', 25], ['-3.6935', 42]]} />
      <div className={PANE}><Histogram data={HIST_4} zero={25} title="3.44612063 -0.7715" titleEnd={228} height="h-[48px]" zeroLine={false} /></div>
      <HistAxis height="h-[50px]" labels={[['2.2358', 7], ['0.00', 26], ['-2.0966', 42]]} mark={false} />
      <div className="col-span-2 -mt-px"><DateAxis /></div>
    </div>
    <AlertDialog />
  </main>
);

const TABS = [
  { name: 'FTSEMIB40,Daily', width: 'w-[110px]' },
  { name: 'DJ_EUR50,Daily', width: 'w-[100px]' },
  { name: 'IBEX35,Weekly', width: 'w-[100px]' },
  { name: 'SMI,Daily', width: 'w-[72px]' },
  { name: 'CAC40,Weekly', width: 'w-[100px]' },
  { name: 'DOLLAR_INDX,Weekly', width: 'w-[140px]' },
  { name: 'EURUSD,Weekly', width: 'w-[108px]' },
  { name: 'CrudeOIL,Daily', width: 'w-[100px]' },
  { name: 'WHEAT,H4', width: 'w-[80px]' },
  { name: 'COCOA,Daily', width: 'w-[92px]' },
  { name: 'COFFEE_C,Weekly', width: 'w-[115px]' },
];

const ChartTabs: React.FC = () => (
  <div role="tablist" className="h-[22px] flex items-start bg-[#f0f0f0] border-t border-[#e3e3e3] border-b border-b-white text-[12px] text-[#6d6d6d] whitespace-nowrap overflow-hidden">
    <div className="pl-[5px] pb-0.5 h-full shrink-0 border-t border-black flex items-center">
      {TABS.map((tab, i) => (
        <button key={tab.name} type="button" role="tab" className={`${tab.width} h-[14px] leading-[14px] shrink-0 ${i < TABS.length - 1 ? 'border-r border-[#6d6d6d]' : ''}`}>{tab.name}</button>
      ))}
    </div>
    <button type="button" role="tab" aria-selected="true" className="w-[120px] h-[19px] pt-px shrink-0 bg-white border border-black border-t-0 border-b-2 text-black leading-[18px]">SUGAR#11,Weekly</button>
    <div className="flex-1 h-full pb-0.5 flex items-center border-t border-black min-w-0">
      <button type="button" role="tab" className="w-[86px] pl-[11px] overflow-hidden text-left">PALLADIUM,D</button>
      <button type="button" aria-label="Schede precedenti" className="ml-1.5"><svg width="4" height="6" className="block"><path d="M4 0v6L0 3z" fill="#909090" /></svg></button>
      <button type="button" aria-label="Schede successive" className="ml-4"><svg width="4" height="8" className="block"><path d="M0 0v8l4-4z" fill="#000000" /></svg></button>
    </div>
  </div>
);

const StatusBar: React.FC = () => (
  <footer className="h-[22px] pt-0.5 flex items-center bg-[#f0f0f0] text-[12px] text-black">
    <span className="flex-1 pl-0.5">Per aiuto, premi F1</span>
    <span className="w-[116px] h-[18px] leading-[18px] border-l border-[#a0a0a0] pl-[5px]">Default</span>
    <span className="w-[102px] h-[18px] border-l border-[#a0a0a0]" />
    <span className="w-[71px] h-[18px] border-l border-[#a0a0a0]" />
    <span className="w-[71px] h-[18px] border-l border-[#a0a0a0]" />
    <span className="w-[68px] h-[18px] border-l border-[#a0a0a0]" />
    <span className="w-[70px] h-[18px] border-l border-[#a0a0a0]" />
    <span className="w-[66px] h-[18px] border-l border-[#a0a0a0]" />
    <span className="w-[130px] h-[18px] border-l border-[#a0a0a0] pl-[5px] flex items-center gap-1">
      <svg width="23" height="13" shapeRendering="crispEdges">
        {Array.from({ length: 8 }, (_, i) => (
          <g key={i}>
            <rect x={i * 3} y="0" width="2" height={10 - i} fill="#5f7a0a" />
            <rect x={i * 3} y={11 - i} width="2" height={2 + i} fill="#0a3f5f" />
          </g>
        ))}
      </svg>
      4484/6 kb
    </span>
  </footer>
);

const App: React.FC = () => (
  <div className="min-h-screen flex flex-col bg-[#f0f0f0] text-black font-['Roboto','Noto_Sans',sans-serif] overflow-hidden">
    <TitleBar />
    <MenuBar />
    <Toolbar />
    <ChartWindow />
    <ChartTabs />
    <StatusBar />
  </div>
);

export default App;
